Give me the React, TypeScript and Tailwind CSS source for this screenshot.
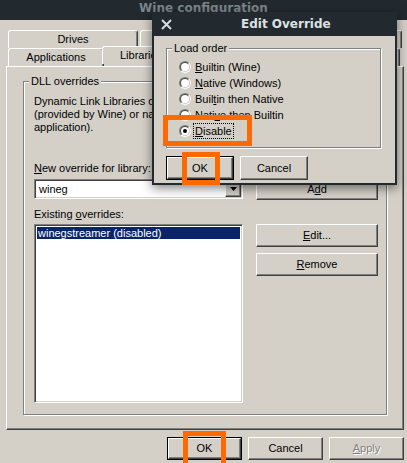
import React from "react";

const U = ({ children }: { children: React.ReactNode }) => (
  <span className="underline underline-offset-[1px] decoration-[1px]">{children}</span>
);

const raised =
  "bg-[#d4d0c8] border border-t-white border-l-white border-r-[#404040] border-b-[#404040] shadow-[inset_-1px_-1px_0_#808080] flex items-center justify-center";

const Button = ({
  children,
  className = "",
  isDefault = false,
  disabled = false,
}: {
  children: React.ReactNode;
  className?: string;
  isDefault?: boolean;
  disabled?: boolean;
}) => {
  const label = (
    <span className={disabled ? "text-[#808080] [text-shadow:1px_1px_0_#fff]" : "text-black"}>{children}</span>
  );
  if (isDefault) {
    return (
      <div className={`border border-black flex ${className}`}>
        <div className={`${raised} flex-1`}>{label}</div>
      </div>
    );
  }
  return <div className={`${raised} ${className}`}>{label}</div>;
};

const Radio = ({ checked = false }: { checked?: boolean }) => (
  <div className="w-[12px] h-[12px] shrink-0 rounded-full border border-t-[#808080] border-l-[#808080] border-r-white border-b-white">
    <div className="w-full h-full rounded-full border border-t-[#404040] border-l-[#404040] border-r-[#d4d0c8] border-b-[#d4d0c8] bg-white flex items-center justify-center">
      {checked && <div className="w-[4px] h-[4px] rounded-full bg-black" />}
    </div>
  </div>
);

const Tab = ({ children, className = "" }: { children: React.ReactNode; className?: string }) => (
  <div
    className={`h-full border-t border-l border-white border-r border-r-[#404040] rounded-t-[3px] shadow-[inset_-1px_0_0_#808080] flex items-center justify-center ${className}`}
  >
    {children}
  </div>
);

const sunken =
  "border border-t-[#808080] border-l-[#808080] border-r-white border-b-white shadow-[inset_1px_1px_0_#404040,inset_-1px_-1px_0_#d4d0c8] bg-white";

export default function App() {
  return (
    <div className="relative w-[407px] h-[463px] overflow-hidden bg-[#d4d0c8] text-[11px] leading-[13px] text-black font-['Liberation_Sans',Arial,sans-serif]">
      {/* main window title */}
      <div className="h-[20px] bg-[#222a2f] flex justify-center pt-[1px]">
        <span className="font-['DejaVu_Sans',sans-serif] font-bold text-[12px] leading-[14px] text-[#7d868b]">
          Wine configuration
        </span>
      </div>

      {/* tabs */}
      <div className="mt-[10px]">
        <div className="flex h-[18px] pl-[8px] gap-[2px]">
          <Tab className="w-[130px]">Drives</Tab>
          <Tab className="w-[130px]">Audio</Tab>
          <Tab className="w-[130px]">About</Tab>
        </div>
        <div className="flex h-[18px] pl-[8px]">
          <Tab className="w-[96px]">Applications</Tab>
          <Tab className="w-[90px] -ml-[2px] -mt-[2px] h-[21px] relative z-10 bg-[#d4d0c8] pr-[6px] justify-start pl-[17px]">
            Libraries
          </Tab>
          <Tab className="w-[80px] -ml-[2px]">Graphics</Tab>
          <Tab className="w-[130px]">Desktop Integration</Tab>
        </div>
      </div>

      {/* tab panel */}
      <div className="ml-[6px] w-[398px] h-[364px] border border-t-white border-l-white border-r-[#404040] border-b-[#404040] shadow-[inset_-1px_-1px_0_#808080] pl-[16px] pt-[14px]">
        <div className="relative w-[364px] h-[334px] border border-[#808080] shadow-[inset_1px_1px_0_#fff,1px_1px_0_#fff] pl-[10px] pt-[13px]">
          <span className="absolute left-[5px] -top-[7px] px-[2px] bg-[#d4d0c8]">DLL overrides</span>
          <p>
            Dynamic Link Libraries can be specified individually to be either builtin
            <br />
            (provided by Wine) or native (taken from Windows or provided by the
            <br />
            application).
          </p>

          <div className="mt-[28px]">
            <U>N</U>ew override for library:
          </div>
          <div className="mt-[3px] h-[22px] flex items-center gap-[13px]">
            <div className={`${sunken} w-[209px] h-[20px] flex items-center`}>
              <span className="pl-[4px] flex-1">wineg</span>
              <div className={`${raised} w-[16px] h-[16px] mr-[1px]`}>
                <svg width="7" height="4" viewBox="0 0 7 4">
                  <path d="M0 0h7L3.5 4z" fill="#000" />
                </svg>
              </div>
            </div>
            <Button className="w-[122px] h-[22px]">
              A<U>d</U>d
            </Button>
          </div>

          <div className="mt-[8px] flex gap-[13px]">
            <div className="w-[209px]">
              <div>
                Existing <U>o</U>verrides:
              </div>
              <div className={`${sunken} mt-[3px] h-[179px] p-[2px]`}>
                <div className="bg-[#0a246a] text-white h-[12px] leading-[12px] pl-[1px]">winegstreamer (disabled)</div>
              </div>
            </div>
            <div className="w-[122px] pt-[16px] flex flex-col gap-[6px]">
              <Button className="h-[23px]">
                <U>E</U>dit...
              </Button>
              <Button className="h-[23px]">
                <U>R</U>emove
              </Button>
            </div>
          </div>
        </div>
      </div>

      {/* bottom buttons */}
      <div className="mt-[7px] flex justify-end gap-[6px] pr-[3px]">
        <Button isDefault className="w-[75px] h-[23px]">
          OK
        </Button>
        <Button className="w-[75px] h-[23px]">Cancel</Button>
        <Button disabled className="w-[75px] h-[23px]">
          <U>A</U>pply
        </Button>
      </div>

      {/* Edit Override dialog */}
      <div className="absolute z-20 left-[152px] top-[12px] w-[245px] bg-[#222a2f] shadow-[0_3px_10px_rgba(0,0,0,0.5)]">
        <div className="h-[24px] flex items-start">
          <svg className="ml-[9px] mt-[7px]" width="11" height="11" viewBox="0 0 11 11">
            <path d="M1 1L10 10M10 1L1 10" stroke="#d9dde0" strokeWidth="2" />
          </svg>
          <span className="ml-[69px] pt-[5px] font-['DejaVu_Sans',sans-serif] font-bold text-[12px] leading-[14px] text-[#dde1e4]">
            Edit Override
          </span>
        </div>
        <div className="mx-[2px] mb-[2px] h-[147px] bg-[#d4d0c8] pl-[12px] pt-[12px]">
          <div className="relative w-[215px] h-[100px] border border-[#808080] shadow-[inset_1px_1px_0_#fff,1px_1px_0_#fff] pl-[12px] pt-[10px]">
            <span className="absolute left-[5px] -top-[7px] px-[2px] bg-[#d4d0c8]">Load order</span>
            <div className="h-[16px] flex items-center gap-[4px]">
              <Radio />
              <span>
                <U>B</U>uiltin (Wine)
              </span>
            </div>
            <div className="h-[16px] flex items-center gap-[4px]">
              <Radio />
              <span>
                <U>N</U>ative (Windows)
              </span>
            </div>
            <div className="h-[16px] flex items-center gap-[4px]">
              <Radio />
              <span>
                Buil<U>t</U>in then Native
              </span>
            </div>
            <div className="h-[16px] flex items-center gap-[4px]">
              <Radio />
              <span>
                Nati<U>v</U>e then Builtin
              </span>
            </div>
            <div className="h-[16px] flex items-center gap-[2px]">
              <Radio checked />
              <span className="h-[16px] flex items-center border border-dotted border-black px-[1px]">
                <U>D</U>isable
              </span>
            </div>
          </div>
          <div className="mt-[8px] flex gap-[6px]">
            <Button isDefault className="w-[68px] h-[24px]">
              OK
            </Button>
            <Button className="w-[68px] h-[24px]">Cancel</Button>
          </div>
        </div>
      </div>

      {/* highlight annotations */}
      <div className="absolute z-30 left-[163px] top-[115px] w-[89px] h-[31px] border-[5px] border-[#ff6a00]" />
      <div className="absolute z-30 left-[182px] top-[152px] w-[38px] h-[33px] border-[5px] border-[#ff6a00]" />
      <div className="absolute z-30 left-[183px] top-[431px] w-[43px] h-[40px] border-[5px] border-[#ff6a00]" />
    </div>
  );
}
